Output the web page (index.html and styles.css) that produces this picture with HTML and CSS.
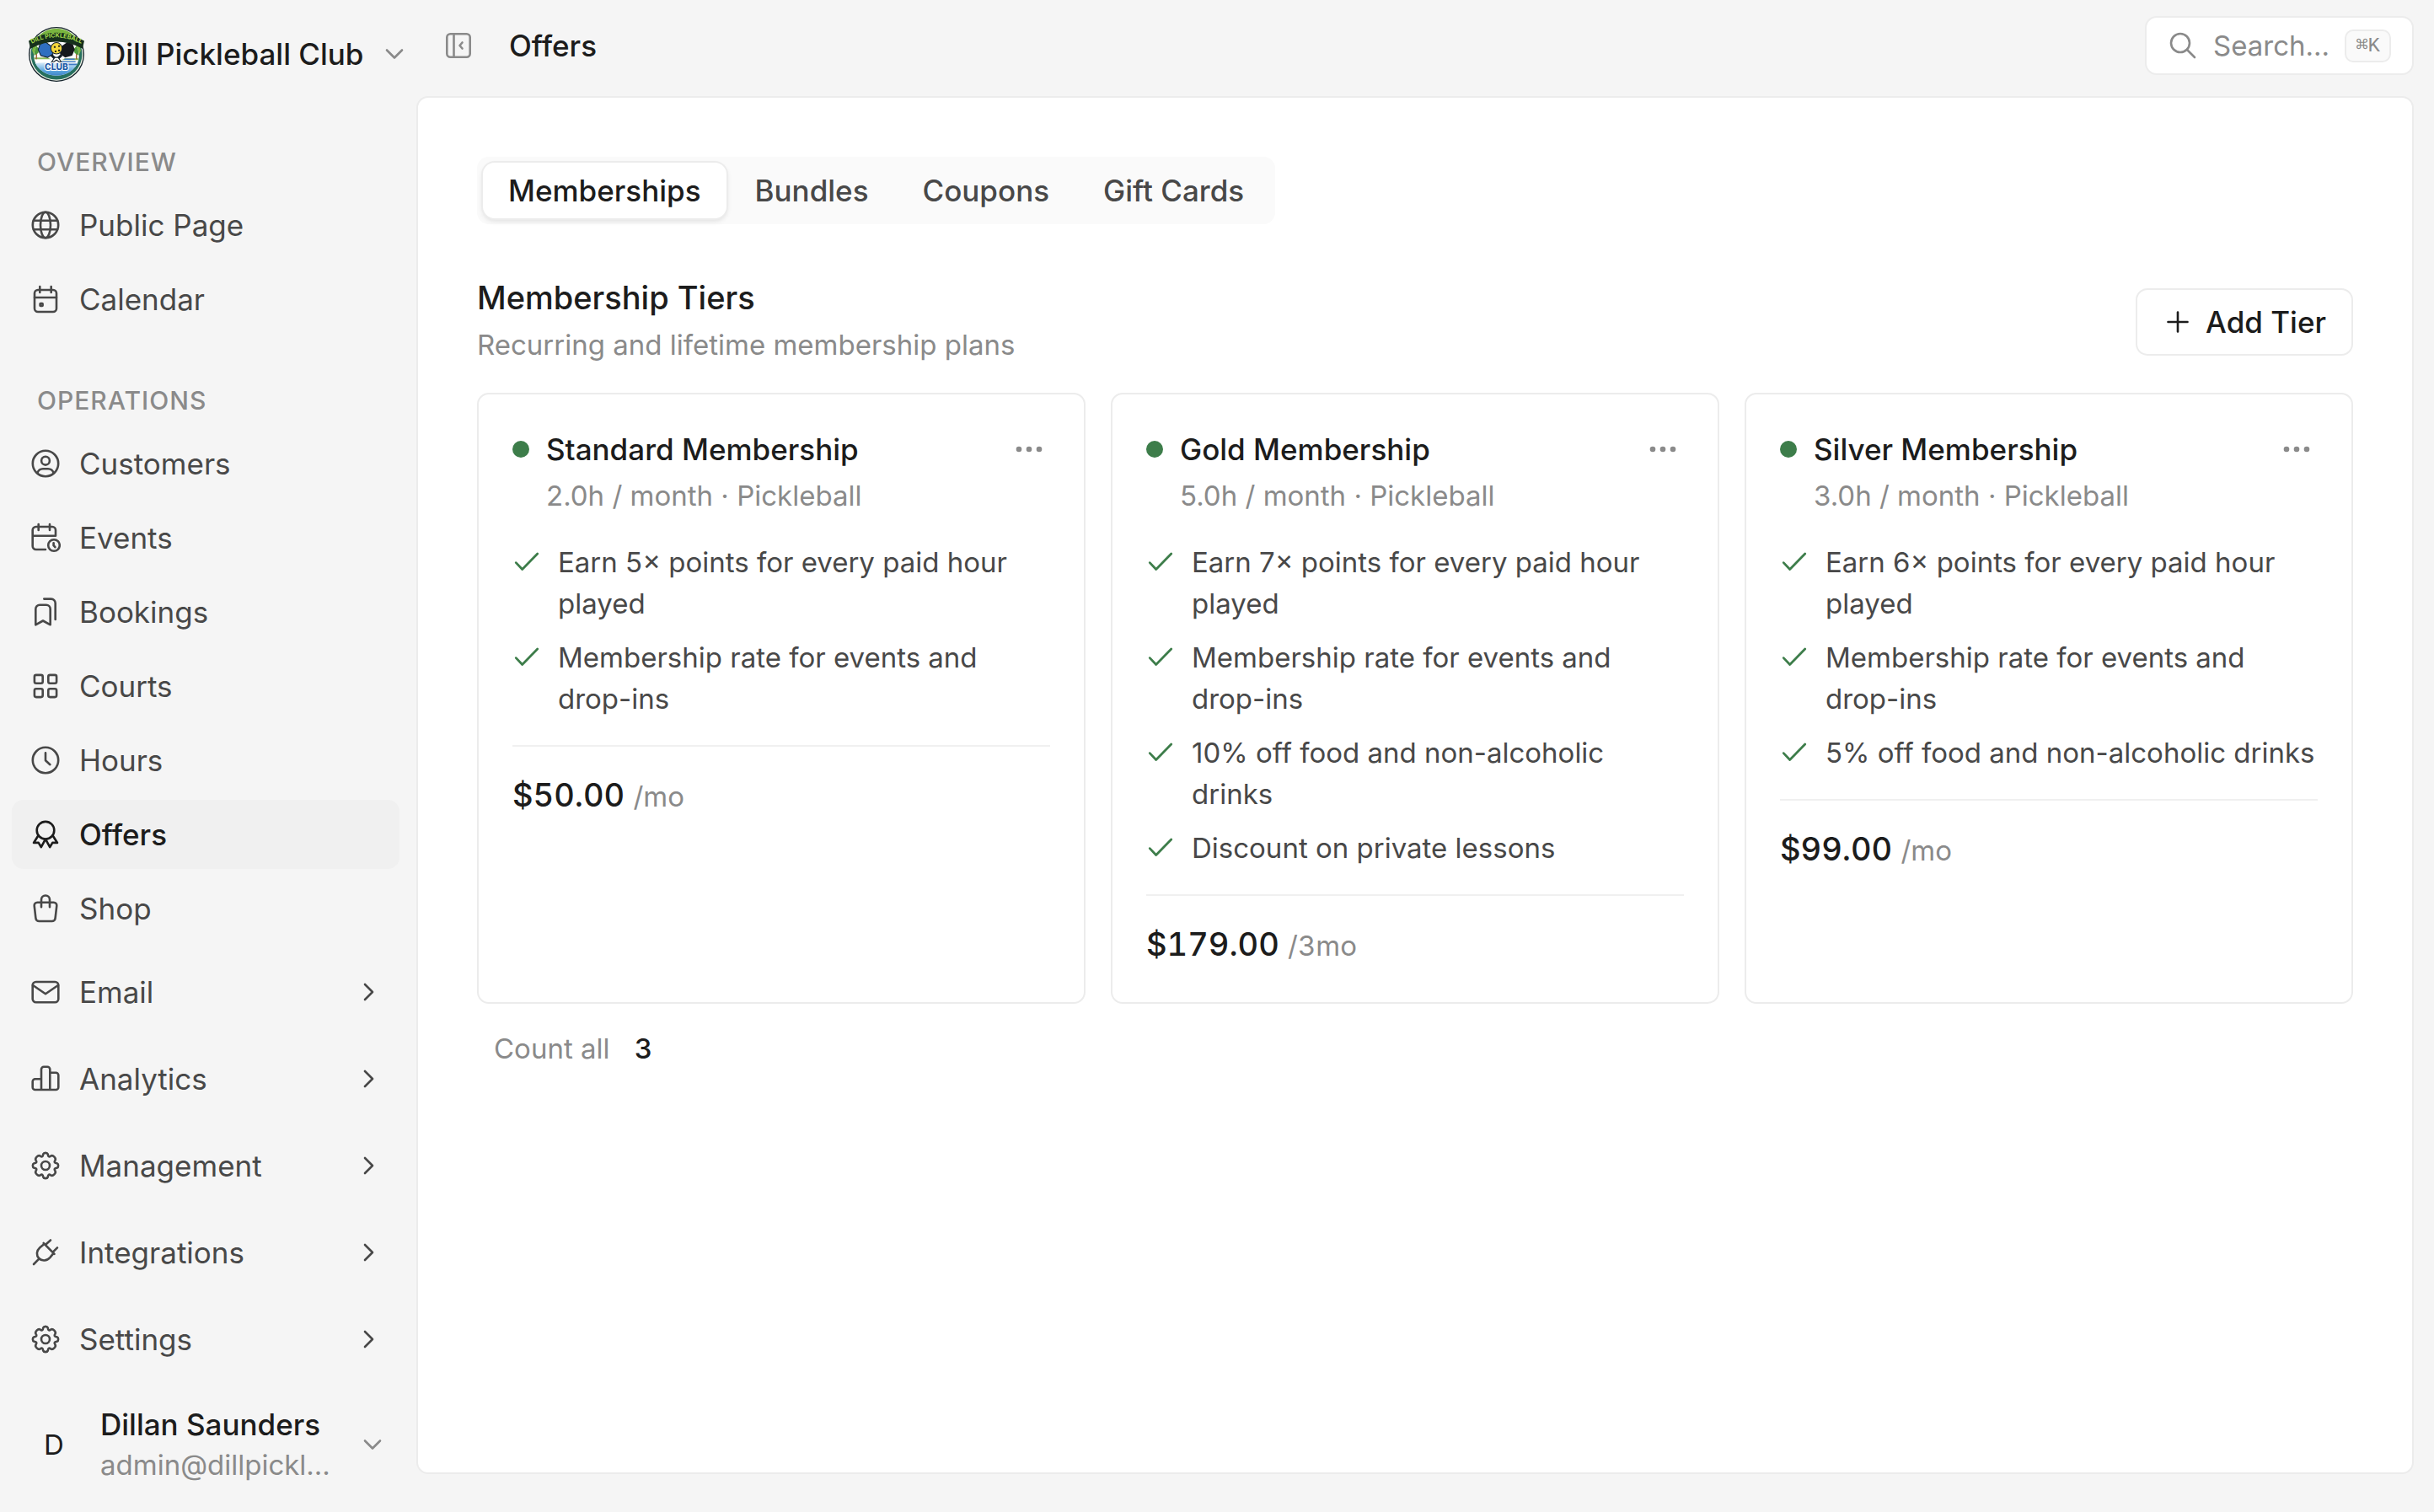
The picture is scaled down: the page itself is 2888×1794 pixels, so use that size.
FILE: index.html
```
<!DOCTYPE html>
<html lang="en">
<head>
    <meta charset="UTF-8">
    <meta name="viewport" content="width=device-width, initial-scale=1.0">
    <title>Offers - Dill Pickleball Club</title>
    <link rel="stylesheet" href="styles.css">
</head>
<body>
    <!-- Shared icons -->
    <svg class="sprite" aria-hidden="true">
        <symbol id="i-globe" viewBox="0 0 36 36"><circle cx="18" cy="18" r="15.2"/><ellipse cx="18" cy="18" rx="6" ry="15.2"/><path d="M4 12.8h28M4 23.2h28"/></symbol>
        <symbol id="i-calendar" viewBox="0 0 36 36"><rect x="5" y="7" width="26" height="26" rx="4"/><path d="M5 16h26M11.3 3v7M24.7 3v7"/><rect x="11.6" y="23" width="3" height="3" rx=".5"/></symbol>
        <symbol id="i-user" viewBox="0 0 36 36"><circle cx="18" cy="18" r="15.2"/><circle cx="18" cy="14.7" r="4.9"/><path d="M8.3 29.3C9.3 26.2 12 24.2 15 24.2h6c3 0 5.7 2 6.7 5.1"/></symbol>
        <symbol id="i-events" viewBox="0 0 36 36"><path d="M18 32H6.7a4 4 0 0 1-4-4V9a4 4 0 0 1 4-4H26a4 4 0 0 1 4 4v6.7H2.7M9.7 2v7M23 2v7"/><circle cx="28" cy="27" r="6.8"/><path d="M27.6 24.3v2.9l1.8 2"/></symbol>
        <symbol id="i-bookings" viewBox="0 0 36 36"><path d="M6.3 33.3V14.5a4.8 4.8 0 0 1 4.8-4.8h7.8a4.8 4.8 0 0 1 4.8 4.8v18.8L15 28.5z"/><path d="M16.3 2.6h8.4a5 5 0 0 1 5 5V27"/></symbol>
        <symbol id="i-courts" viewBox="0 0 36 36"><rect x="4.9" y="4.9" width="9.8" height="9.8" rx="2"/><rect x="21.3" y="4.9" width="9.8" height="9.8" rx="2"/><rect x="4.9" y="21.3" width="9.8" height="9.8" rx="2"/><rect x="21.3" y="21.3" width="9.8" height="9.8" rx="2"/></symbol>
        <symbol id="i-clock" viewBox="0 0 36 36"><circle cx="18" cy="18" r="15.2"/><path d="M18 9.3v8.9l5.4 5"/></symbol>
        <symbol id="i-award" viewBox="0 0 36 36"><circle cx="18" cy="13.2" r="10.3"/><path d="M9.5 19.2 4 28l5.7-.2 3.1 5.4 5.2-9.5 5.2 9.5 3.1-5.4 5.7.2-5.5-8.8"/></symbol>
        <symbol id="i-shop" viewBox="0 0 36 36"><path d="M8.3 10.7h19.4a3.6 3.6 0 0 1 3.6 4l-1.7 14.6a4 4 0 0 1-4 3.7H10.4a4 4 0 0 1-4-3.7L4.7 14.7a3.6 3.6 0 0 1 3.6-4z"/><path d="M13 16.3V7.5a5 5 0 0 1 10 0v8.8"/></symbol>
        <symbol id="i-mail" viewBox="0 0 36 36"><rect x="2.7" y="6" width="30.6" height="24.3" rx="4"/><path d="m3 10 15 10.3L33 10"/></symbol>
        <symbol id="i-chart" viewBox="0 0 36 36"><path d="M13 31H5.7a3 3 0 0 1-3-3v-6.7a3 3 0 0 1 3-3H13M23.3 10.7h7a3 3 0 0 1 3 3V28a3 3 0 0 1-3 3H13V6.7a3 3 0 0 1 3-3h4.3a3 3 0 0 1 3 3V31"/></symbol>
        <symbol id="i-gear" viewBox="0 0 36 36"><circle cx="18" cy="18" r="5"/><path d="M15.2 4.5C16 2.3 20 2.3 20.8 4.5C20.9 7.4 22.2 8 24.2 6.6C26.8 4.9 31.1 9.2 29.4 11.8C28 13.8 28.6 15.1 31.5 15.2C33.7 16 33.7 20 31.5 20.8C28.6 20.9 28 22.2 29.4 24.2C31.1 26.8 26.8 31.1 24.2 29.4C22.2 28 20.9 28.6 20.8 31.5C20 33.7 16 33.7 15.2 31.5C15.1 28.6 13.8 28 11.8 29.4C9.2 31.1 4.9 26.8 6.6 24.2C8 22.2 7.4 20.9 4.5 20.8C2.3 20 2.3 16 4.5 15.2C7.4 15.1 8 13.8 6.6 11.8C4.9 9.2 9.2 4.9 11.8 6.6C13.8 8 15.1 7.4 15.2 4.5Z"/></symbol>
        <symbol id="i-plug" viewBox="0 0 36 36"><path d="m15.7 7 12.8 12.8M17.8 9 24 3.5M26.5 17.8l5.5-5.5M16.5 8l-5.2 4.2c-4.3 4-4.4 9.3-1.1 12.8s9.3 3.4 13.1-.9l4.3-5.2M4 32l6-6.2"/></symbol>
        <symbol id="i-right" viewBox="0 0 24 24"><path d="m9 3 9 9-9 9"/></symbol>
        <symbol id="i-down" viewBox="0 0 24 24"><path d="m3 7.5 9 9 9-9"/></symbol>
        <symbol id="i-check" viewBox="0 0 32 32"><path d="m4 17.5 7 7.5L28 7.5"/></symbol>
        <symbol id="i-dots" viewBox="0 0 36 36"><circle cx="6" cy="18" r="3.3"/><circle cx="18" cy="18" r="3.3"/><circle cx="30" cy="18" r="3.3"/></symbol>
    </svg>

    <div class="app">
        <aside class="sidebar">
            <button class="club" type="button">
                <svg class="club-logo" viewBox="0 0 64 64" aria-hidden="true">
                    <defs>
                        <linearGradient id="water" x1="0" y1="0" x2="0" y2="1">
                            <stop offset="0" stop-color="#d8ecf8"/>
                            <stop offset=".5" stop-color="#5fa8e0"/>
                            <stop offset="1" stop-color="#2f73bd"/>
                        </linearGradient>
                        <clipPath id="inner"><ellipse cx="32" cy="34" rx="26" ry="23"/></clipPath>
                        <path id="arc" d="M2 21Q32 5 62 21"/>
                    </defs>
                    <ellipse cx="32" cy="32.5" rx="32" ry="31.5" fill="#14222b"/>
                    <ellipse cx="32" cy="32.5" rx="30.7" ry="30.2" fill="#f4f8ea"/>
                    <ellipse cx="32" cy="32.5" rx="29.5" ry="29" fill="#27705f"/>
                    <path d="M4 28C8 8 22 3 32 3s24 5 28 25l-5 12H9z" fill="#79b53f"/>
                    <ellipse cx="32" cy="34" rx="26" ry="23" fill="#fff"/>
                    <g clip-path="url(#inner)">
                        <path d="M6 36h15l5 2H6zM42 37h16v2H38z" fill="#8dbb5a"/>
                        <path d="M6 43q13-2 26 0t26 0v17H6z" fill="url(#water)"/>
                        <path d="M41 38h12M38 41h16M44 44h12" stroke="#3f7cc4" stroke-width="1.5"/>
                        <path d="M9 28v10M55 28v10" stroke="#a2683a" stroke-width="1.5"/>
                        <path d="M7 22q7 3 4 9l-5 3zM57 22q-7 3-4 9l5 3z" fill="#4f9a3a"/>
                    </g>
                    <path d="m26 33 6 6M38 33l-6 6" stroke="#14222b" stroke-width="3"/>
                    <path d="m13 21 6-3 7 5 2 9-6 4-8-2-3-7z" fill="#2f6fc0" stroke="#14222b" stroke-width="1"/>
                    <path d="m51 21-6-3-7 5-2 9 6 4 8-2 3-7z" fill="#15191c"/>
                    <circle cx="32" cy="25.5" r="6.5" fill="#f5d83c" stroke="#14222b" stroke-width="1"/>
                    <path d="M29 23h2v2h-2zM34 22h2v2h-2zM34 27h2v2h-2zM30 28h2v2h-2z" fill="#2b2a16"/>
                    <path d="m26 42 4-6h4l4 6-3-1-3-2-3 2z" fill="#fff" stroke="#14222b" stroke-width="1"/>
                    <path d="M0 17Q32-2 64 17l-2 9Q32 10 2 26z" fill="#16301c"/>
                    <text class="logo-name"><textPath href="#arc" startOffset="50%">DILL PICKLEBALL</textPath></text>
                    <text class="logo-club" x="32" y="50">CLUB</text>
                </svg>
                <span>Dill Pickleball Club</span>
                <svg class="icon chev"><use href="#i-down"/></svg>
            </button>

            <nav class="nav">
                <h2 class="nav-label">Overview</h2>
                <a href="#" class="nav-item"><svg class="icon"><use href="#i-globe"/></svg>Public Page</a>
                <a href="#" class="nav-item"><svg class="icon"><use href="#i-calendar"/></svg>Calendar</a>

                <h2 class="nav-label">Operations</h2>
                <a href="#" class="nav-item"><svg class="icon"><use href="#i-user"/></svg>Customers</a>
                <a href="#" class="nav-item"><svg class="icon"><use href="#i-events"/></svg>Events</a>
                <a href="#" class="nav-item"><svg class="icon"><use href="#i-bookings"/></svg>Bookings</a>
                <a href="#" class="nav-item"><svg class="icon"><use href="#i-courts"/></svg>Courts</a>
                <a href="#" class="nav-item"><svg class="icon"><use href="#i-clock"/></svg>Hours</a>
                <a href="#" class="nav-item active"><svg class="icon"><use href="#i-award"/></svg>Offers</a>
                <a href="#" class="nav-item"><svg class="icon"><use href="#i-shop"/></svg>Shop</a>
            </nav>

            <div class="nav-groups">
                <button class="nav-item" type="button"><svg class="icon"><use href="#i-mail"/></svg>Email<svg class="icon chev"><use href="#i-right"/></svg></button>
                <button class="nav-item" type="button"><svg class="icon"><use href="#i-chart"/></svg>Analytics<svg class="icon chev"><use href="#i-right"/></svg></button>
                <button class="nav-item" type="button"><svg class="icon"><use href="#i-gear"/></svg>Management<svg class="icon chev"><use href="#i-right"/></svg></button>
                <button class="nav-item" type="button"><svg class="icon"><use href="#i-plug"/></svg>Integrations<svg class="icon chev"><use href="#i-right"/></svg></button>
                <button class="nav-item" type="button"><svg class="icon"><use href="#i-gear"/></svg>Settings<svg class="icon chev"><use href="#i-right"/></svg></button>
            </div>

            <button class="account" type="button">
                <span class="avatar">D</span>
                <span class="account-text">
                    <span class="account-name">Dillan Saunders</span>
                    <span class="account-email">admin@dillpickl...</span>
                </span>
                <svg class="icon chev"><use href="#i-down"/></svg>
            </button>
        </aside>

        <div class="page">
            <header class="topbar">
                <button class="collapse" type="button" aria-label="Collapse sidebar">
                    <svg class="icon" viewBox="0 0 36 36"><rect x="4.3" y="4.3" width="27.4" height="27.4" rx="4"/><path d="M12.5 4.3v27.4M22.5 14.5 19.5 18l3 3.5"/></svg>
                </button>
                <h1>Offers</h1>
                <label class="search">
                    <svg class="icon" viewBox="0 0 36 36"><circle cx="15" cy="15" r="11"/><path d="m23 23 9 9"/></svg>
                    <input type="text" placeholder="Search..." aria-label="Search">
                    <kbd>⌘K</kbd>
                </label>
            </header>

            <main class="panel">
                <div class="tabs" role="tablist">
                    <button class="tab active" type="button" role="tab" aria-selected="true">Memberships</button>
                    <button class="tab" type="button" role="tab">Bundles</button>
                    <button class="tab" type="button" role="tab">Coupons</button>
                    <button class="tab" type="button" role="tab">Gift Cards</button>
                </div>

                <div class="section-head">
                    <div>
                        <h2>Membership Tiers</h2>
                        <p>Recurring and lifetime membership plans</p>
                    </div>
                    <button class="add" type="button">
                        <svg class="icon" viewBox="0 0 36 36"><path d="M18 6.5v23M6.5 18h23"/></svg>
                        Add Tier
                    </button>
                </div>

                <div class="cards">
                    <article class="card">
                        <div class="card-head">
                            <span class="dot"></span>
                            <h3>Standard Membership</h3>
                            <button class="more" type="button" aria-label="More"><svg><use href="#i-dots"/></svg></button>
                        </div>
                        <p class="card-sub">2.0h / month · Pickleball</p>
                        <ul>
                            <li><svg class="icon check"><use href="#i-check"/></svg>Earn 5× points for every paid hour played</li>
                            <li><svg class="icon check"><use href="#i-check"/></svg>Membership rate for events and drop-ins</li>
                        </ul>
                        <p class="price">$50.00 <span>/mo</span></p>
                    </article>

                    <article class="card">
                        <div class="card-head">
                            <span class="dot"></span>
                            <h3>Gold Membership</h3>
                            <button class="more" type="button" aria-label="More"><svg><use href="#i-dots"/></svg></button>
                        </div>
                        <p class="card-sub">5.0h / month · Pickleball</p>
                        <ul>
                            <li><svg class="icon check"><use href="#i-check"/></svg>Earn 7× points for every paid hour played</li>
                            <li><svg class="icon check"><use href="#i-check"/></svg>Membership rate for events and drop-ins</li>
                            <li><svg class="icon check"><use href="#i-check"/></svg>10% off food and non-alcoholic drinks</li>
                            <li><svg class="icon check"><use href="#i-check"/></svg>Discount on private lessons</li>
                        </ul>
                        <p class="price">$179.00 <span>/3mo</span></p>
                    </article>

                    <article class="card">
                        <div class="card-head">
                            <span class="dot"></span>
                            <h3>Silver Membership</h3>
                            <button class="more" type="button" aria-label="More"><svg><use href="#i-dots"/></svg></button>
                        </div>
                        <p class="card-sub">3.0h / month · Pickleball</p>
                        <ul>
                            <li><svg class="icon check"><use href="#i-check"/></svg>Earn 6× points for every paid hour played</li>
                            <li><svg class="icon check"><use href="#i-check"/></svg>Membership rate for events and drop-ins</li>
                            <li><svg class="icon check"><use href="#i-check"/></svg>5% off food and non-alcoholic drinks</li>
                        </ul>
                        <p class="price">$99.00 <span>/mo</span></p>
                    </article>
                </div>

                <p class="count">Count all <strong>3</strong></p>
            </main>
        </div>
    </div>
</body>
</html>
```
FILE: styles.css
```
* {
    box-sizing: border-box;
}

body {
    margin: 0;
    font-family: Inter, "Liberation Sans", sans-serif;
    font-size: 35px;
    line-height: 48px;
    color: #1c1c1c;
    background: #f5f5f5;
}

h1, h2, h3, p, ul {
    margin: 0;
    padding: 0;
    font-size: inherit;
    font-weight: 500;
}

button {
    margin: 0;
    padding: 0;
    border: none;
    background: none;
    color: inherit;
    font: inherit;
    text-align: left;
    cursor: pointer;
}

.sprite {
    display: none;
}

.icon {
    width: 36px;
    height: 36px;
    flex: none;
    fill: none;
    stroke: currentColor;
    stroke-width: 2.6;
    stroke-linecap: round;
    stroke-linejoin: round;
}

.icon.chev {
    width: 24px;
    height: 24px;
    margin-left: auto;
}

.app {
    display: flex;
    min-height: 100vh;
}

/* Sidebar */
.sidebar {
    width: 494px;
    flex: none;
    display: flex;
    flex-direction: column;
    padding: 24px 20px 32px 14px;
}

.club {
    display: flex;
    align-items: center;
    gap: 24px;
    height: 80px;
    padding-left: 20px;
    margin-right: -6px;
    font-weight: 500;
    white-space: nowrap;
}

.club-logo {
    width: 66px;
    height: 66px;
}

.logo-name {
    font: 700 7px Inter, sans-serif;
    fill: #a5dc4c;
    text-anchor: middle;
}

.logo-club {
    font: 800 10px Inter, sans-serif;
    fill: #1f5ba8;
    stroke: #fff;
    stroke-width: 2;
    paint-order: stroke;
    text-anchor: middle;
}

.club .chev,
.account .chev {
    color: #8a8a8a;
}

.nav-label {
    padding-left: 30px;
    margin: 55px 0 10px;
    font-size: 30px;
    line-height: 48px;
    letter-spacing: 1px;
    text-transform: uppercase;
    color: #8a8a8a;
}

.nav-label:first-child {
    margin-top: 64px;
}

.nav {
    display: flex;
    flex-direction: column;
}

.nav-item {
    display: flex;
    align-items: center;
    gap: 22px;
    height: 82px;
    padding: 0 26px 0 22px;
    border-radius: 14px;
    color: #484848;
    text-decoration: none;
}

.nav-item + .nav-item {
    margin-top: 6px;
}

.nav-item.active {
    background: #f0f0f0;
    color: #1c1c1c;
    font-weight: 500;
}

.nav-groups {
    display: flex;
    flex-direction: column;
    gap: 21px;
    margin-top: 17px;
}

.nav-groups .nav-item {
    margin-top: 0;
}

.account {
    display: flex;
    align-items: center;
    margin-top: auto;
    padding: 0 20px;
}

.avatar {
    width: 60px;
    margin-right: 25px;
    text-align: center;
    font-size: 33px;
}

.account-text {
    display: flex;
    flex-direction: column;
}

.account-name {
    font-weight: 500;
}

.account-email {
    font-size: 33px;
    color: #8a8a8a;
}

/* Page */
.page {
    flex: 1;
    display: flex;
    flex-direction: column;
    padding: 0 24px 45px 0;
}

.topbar {
    display: flex;
    align-items: center;
    height: 114px;
    padding: 0 0 6px 32px;
}

.collapse {
    display: flex;
    margin-right: 42px;
    color: #8a8a8a;
}

.search {
    display: flex;
    align-items: center;
    width: 319px;
    height: 70px;
    margin-left: auto;
    padding: 0 25px;
    background: #fff;
    border: 2px solid #ececec;
    border-radius: 14px;
    color: #8a8a8a;
}

.search input {
    flex: 1;
    min-width: 0;
    margin-left: 18px;
    padding: 0;
    border: none;
    outline: none;
    background: none;
    font: inherit;
    font-size: 33px;
}

.search input::placeholder {
    color: #8a8a8a;
}

kbd {
    padding: 0 11px;
    border: 2px solid #ececec;
    border-radius: 10px;
    background: #fafafa;
    font: 24px/35px "Liberation Mono", "DejaVu Sans Mono", monospace;
}

.panel {
    flex: 1;
    padding: 70px;
    background: #fff;
    border: 2px solid #ececec;
    border-radius: 14px;
}

.tabs {
    display: flex;
    gap: 4px;
    width: fit-content;
    padding: 7px;
    border-radius: 14px;
    background: #fafafa;
}

.tab {
    height: 66px;
    padding: 0 30px;
    border-radius: 14px;
    color: #484848;
    font-weight: 500;
}

.tab.active {
    background: #fff;
    color: #1c1c1c;
    box-shadow: 0 0 0 2px #ececec, 0 3px 6px rgba(0, 0, 0, 0.12);
}

.section-head {
    display: flex;
    align-items: center;
    justify-content: space-between;
    margin: 59px 0 28px;
}

.section-head h2 {
    font-size: 38px;
    line-height: 56px;
}

.section-head p {
    font-size: 33px;
    line-height: 57px;
    font-weight: 400;
    color: #8a8a8a;
}

.add {
    display: flex;
    align-items: center;
    gap: 15px;
    height: 80px;
    padding: 0 30px;
    border: 2px solid #ececec;
    border-radius: 14px;
    font-weight: 500;
}

/* Tier cards */
.cards {
    display: grid;
    grid-template-columns: repeat(3, 1fr);
    gap: 30px;
}

.card {
    padding: 40px;
    border: 2px solid #ececec;
    border-radius: 14px;
}

.card-head {
    display: flex;
    align-items: center;
    gap: 20px;
    height: 50px;
}

.dot {
    width: 20px;
    height: 20px;
    border-radius: 50%;
    background: #3d7d4a;
}

.more {
    display: flex;
    margin-left: auto;
    padding: 0 7px;
}

.more svg {
    width: 36px;
    height: 36px;
    fill: #8a8a8a;
}

.card-sub {
    padding-left: 40px;
    font-size: 33px;
    line-height: 61px;
    font-weight: 400;
    color: #8a8a8a;
}

.card ul {
    display: flex;
    flex-direction: column;
    gap: 15px;
    margin: 24px 0 30px;
    list-style: none;
}

.card li {
    display: flex;
    gap: 20px;
    font-size: 33px;
    line-height: 49px;
    font-weight: 400;
    color: #484848;
}

.check {
    width: 34px;
    height: 34px;
    margin-top: 6px;
    color: #3d7d4a;
}

.price {
    padding-top: 30px;
    border-top: 2px solid #f0f0f0;
    font-size: 38px;
    line-height: 54px;
    font-variant-numeric: tabular-nums;
}

.price span {
    font-size: 33px;
    font-weight: 400;
    color: #8a8a8a;
}

.count {
    margin-top: 29px;
    padding-left: 20px;
    font-size: 33px;
    font-weight: 400;
    color: #8a8a8a;
}

.count strong {
    margin-left: 20px;
    font-weight: 500;
    color: #1c1c1c;
}
```
